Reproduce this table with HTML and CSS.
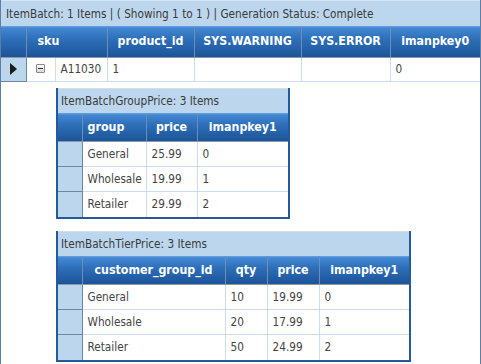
FILE: index.html
```html
<!DOCTYPE html>
<html lang="en">
<head>
  <meta charset="UTF-8" />
  <title>ItemBatch</title>
  <link rel="stylesheet" href="styles.css">
</head>
<body>
  <div class="grid">
    <div class="caption">ItemBatch: 1 Items | ( Showing 1 to 1 ) | Generation Status: Complete</div>
    <table class="main">
      <colgroup>
        <col style="width:25px"><col style="width:29px"><col style="width:52px">
        <col style="width:87px"><col style="width:107px"><col style="width:89px"><col>
      </colgroup>
      <tr class="head">
        <th></th>
        <th colspan="2" class="sku">sku</th>
        <th>product_id</th>
        <th>SYS.WARNING</th>
        <th>SYS.ERROR</th>
        <th>imanpkey0</th>
      </tr>
      <tr class="row">
        <td class="ind"><span class="arrow"></span></td>
        <td class="exp"><span class="minus"></span></td>
        <td>A11030</td>
        <td>1</td>
        <td></td>
        <td></td>
        <td>0</td>
      </tr>
    </table>

    <div class="details">
      <div class="child">
        <div class="caption">ItemBatchGroupPrice: 3 Items</div>
        <table>
          <colgroup>
            <col style="width:24px"><col style="width:64px"><col style="width:51px"><col style="width:91px">
          </colgroup>
          <tr class="head"><th></th><th class="group">group</th><th>price</th><th>imanpkey1</th></tr>
          <tr class="row"><td class="ind"></td><td>General</td><td>25.99</td><td>0</td></tr>
          <tr class="row"><td class="ind"></td><td>Wholesale</td><td>19.99</td><td>1</td></tr>
          <tr class="row"><td class="ind"></td><td>Retailer</td><td>29.99</td><td>2</td></tr>
        </table>
      </div>

      <div class="child">
        <div class="caption">ItemBatchTierPrice: 3 Items</div>
        <table>
          <colgroup>
            <col style="width:24px"><col style="width:143px"><col style="width:42px"><col style="width:52px"><col style="width:90px">
          </colgroup>
          <tr class="head"><th></th><th>customer_group_id</th><th>qty</th><th>price</th><th>imanpkey1</th></tr>
          <tr class="row"><td class="ind"></td><td>General</td><td>10</td><td>19.99</td><td>0</td></tr>
          <tr class="row"><td class="ind"></td><td>Wholesale</td><td>20</td><td>17.99</td><td>1</td></tr>
          <tr class="row"><td class="ind"></td><td>Retailer</td><td>50</td><td>24.99</td><td>2</td></tr>
        </table>
      </div>
    </div>
  </div>
</body>
</html>
```
FILE: styles.css
```css
* {
  margin: 0;
  padding: 0;
  box-sizing: border-box;
}
body {
  background: #fff;
  font-family: "DejaVu Sans", Verdana, sans-serif;
  font-size: 11.7px;
  color: #444;
}
.grid {
  width: 481px;
  height: 364px;
  border-left: 1px solid #5b7fa6;
  border-right: 1px solid #5b7fa6;
  font-stretch: condensed;
}
.caption {
  height: 26px;
  line-height: 26px;
  padding-left: 5px;
  background: #bcd7ed;
  border-top: 1px solid #d6e4f0;
  color: #3a3a3a;
  white-space: nowrap;
}
table {
  border-collapse: collapse;
  table-layout: fixed;
}
.main {
  width: 479px;
}
.head th {
  height: 31px;
  color: #fff;
  font-weight: bold;
  font-size: 12.3px;
  background: linear-gradient(#6aa4e0 0, #4387d2 2px, #2e70ba 40%, #1c5398 100%);
  border-left: 1px solid #6d8fb3;
  border-bottom: 1px solid #8b9aa8;
  text-align: center;
  white-space: nowrap;
}
.head th:first-child {
  border-left: none;
}
.head th.sku {
  text-align: left;
  padding-left: 11px;
}
.head th.group {
  padding-right: 16px;
}
.row td {
  height: 24px;
  padding-left: 5px;
  border-left: 1px solid #c9ddef;
  border-bottom: 1px solid #c9ddef;
  white-space: nowrap;
}
.row td.ind {
  background: #bcd7ed;
  border-left: none;
  border-right: 1px solid #6c87a3;
  border-bottom: 1px solid #6c87a3;
  padding-left: 0;
}
.row td.exp {
  border-left: none;
  padding-left: 0;
  text-align: center;
}
.arrow {
  display: block;
  width: 0;
  height: 0;
  margin-left: 9px;
  border-top: 6px solid transparent;
  border-bottom: 6px solid transparent;
  border-left: 7px solid #1c1c1c;
}
.minus {
  display: inline-block;
  width: 9px;
  height: 9px;
  margin-top: 2px;
  border: 1px solid #8a8a8a;
  border-radius: 1px;
  background: linear-gradient(#fafafa, #d8d8d8);
  position: relative;
  vertical-align: top;
}
.minus::after {
  content: "";
  position: absolute;
  left: 1px;
  right: 1px;
  top: 3px;
  height: 1px;
  background: #333;
}
.details {
  padding: 6px 0 0 55px;
  display: flex;
  flex-direction: column;
  gap: 12px;
}
.child {
  align-self: flex-start;
  border: 2px solid #245a98;
  border-top: none;
}
.child .caption {
  height: 25px;
  line-height: 25px;
  padding-left: 3px;
  border-top: 1px solid #d2dde8;
}
.child .head th {
  height: 29px;
}
.child .row td {
  height: 25px;
}
.child .row:last-child td {
  border-bottom: none;
}
.child .row td:last-child {
  border-right: none;
}
```
